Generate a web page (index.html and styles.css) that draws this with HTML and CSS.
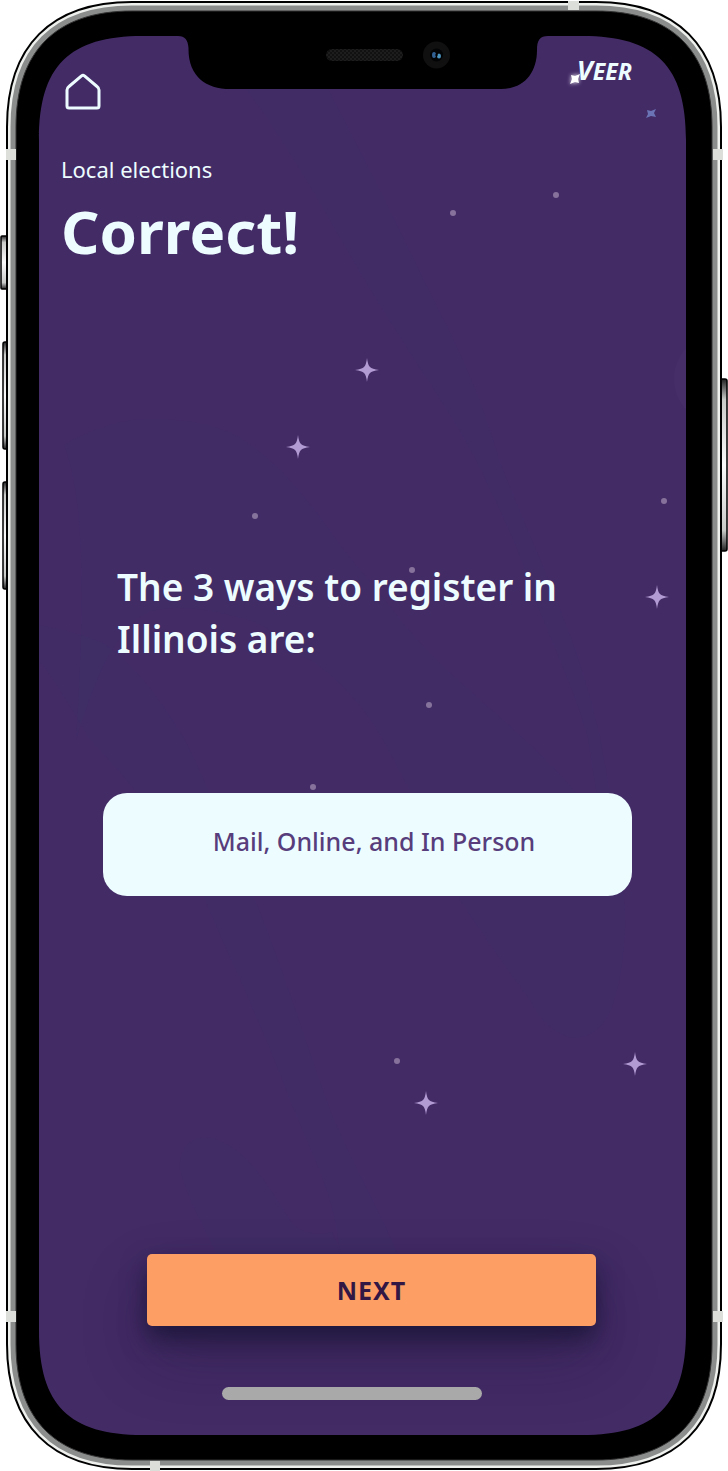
FILE: index.html
```html
<!DOCTYPE html>
<html lang="en">
<head>
<meta charset="utf-8">
<meta name="viewport" content="width=device-width, initial-scale=1">
<title>Local elections – Correct!</title>
<link rel="stylesheet" href="styles.css">
</head>
<body>
<div class="phone">
  <svg class="device" viewBox="0 0 728 1471" preserveAspectRatio="none" aria-hidden="true">
    <defs>
      <path id="body" d="M16 127C16 51 56 11 132 11H596C672 11 712 51 712 127V1344C712 1420 672 1460 596 1460H132C56 1460 16 1420 16 1344Z"/>
      <path id="glass" d="M39 140C39 66 69 36 143 36H178C185 36 188 40 188.500 48C188 76 206 89 230 89H501C523 89 537 74 537 50C537 40 540 36 548 36H582C656 36 686 66 686 140V1331C686 1405 656 1435 582 1435H143C69 1435 39 1405 39 1331Z"/>
      <clipPath id="screen-clip"><use href="#glass"/></clipPath>
      <linearGradient id="metal" x1="0" y1="0" x2="0" y2="1">
        <stop offset="0" stop-color="#222"/><stop offset=".12" stop-color="#c9cbc9"/><stop offset=".5" stop-color="#fafafa"/><stop offset=".88" stop-color="#c9cbc9"/><stop offset="1" stop-color="#222"/>
      </linearGradient>
      <pattern id="mesh" width="4" height="4" patternUnits="userSpaceOnUse">
        <rect width="4" height="4" fill="#111"/><circle cx="1" cy="1" r=".8" fill="#2c2c2c"/><circle cx="3" cy="3" r=".8" fill="#2c2c2c"/>
      </pattern>
      <path id="star" d="M0-12Q.8-5 3-3Q5-.8 12 0Q5 .8 3 3Q.8 5 0 12Q-.8 5-3 3Q-5 .8-12 0Q-5-.8-3-3Q-.8-5 0-12Z"/>
    </defs>

    <g fill="url(#metal)" stroke="#000" stroke-width="1.500">
      <rect x="1" y="236" width="7" height="53" rx="1"/>
      <rect x="3" y="342" width="6" height="107" rx="2"/>
      <rect x="3" y="482" width="6" height="107" rx="2"/>
      <rect x="720" y="379" width="7" height="172" rx="2"/>
    </g>

    <use href="#body" stroke="#000" stroke-width="20"/>
    <use href="#body" stroke="#edf0ed" stroke-width="16"/>
    <use href="#body" stroke="#8b8d8c" stroke-width="11"/>
    <use href="#body" stroke="#333" stroke-width="1"/>
    <g fill="#dcdfd9">
      <rect x="568" y="1" width="11" height="9"/><rect x="150" y="1461" width="10" height="10"/>
      <rect x="6" y="149" width="10" height="11"/><rect x="713" y="149" width="10" height="11"/>
      <rect x="6" y="1311" width="10" height="11"/><rect x="713" y="1311" width="10" height="11"/>
    </g>

    <use href="#glass" fill="#432b66"/>
    <g clip-path="url(#screen-clip)">
      <g fill="#2c4a78" fill-opacity=".05">
        <path d="M246 89H328C360 150 395 220 432 297C470 370 485 410 500 462C530 540 580 640 600 738L626 880H610L588 738C575 690 550 640 535 598C520 550 500 510 477 462C450 410 420 370 390 321C350 260 300 160 246 89Z"/>
        <path d="M64 445C90 430 120 419 150 419C190 419 220 425 245 441C280 465 300 490 328 528C350 560 370 580 390 606C450 690 560 750 600 830C620 860 626 890 625 930C620 1000 610 1035 575 1038C555 1036 540 1020 530 1000C500 960 480 930 460 900C430 830 410 790 382 738C360 700 330 670 303 656C280 635 260 622 245 619C200 605 160 605 142 615C110 640 95 680 76 740C85 600 85 500 64 445Z"/>
        <path d="M39 625C65 630 85 635 105 644C140 670 160 700 184 738C210 790 230 840 255 900C280 960 305 1040 330 1110C355 1170 385 1220 400 1260H340C338 1200 310 1150 290 1100C260 1020 230 960 205 900C170 830 130 780 90 740C75 715 55 680 39 660Z"/>
        <path d="M180 1170C178 1145 195 1134 213 1138C250 1150 270 1190 290 1220C300 1235 320 1235 332 1232L345 1260H220C205 1230 188 1200 180 1170Z"/>
      </g>
      <ellipse cx="704" cy="379" rx="30" ry="38" fill="#fff" fill-opacity=".018"/>
      <g fill="#9d8bad" fill-opacity=".75">
        <circle cx="453" cy="213" r="3"/><circle cx="556" cy="195" r="3"/><circle cx="255" cy="516" r="3"/><circle cx="664" cy="501" r="3"/><circle cx="412" cy="570" r="3"/><circle cx="429" cy="705" r="3"/><circle cx="313" cy="787" r="3"/><circle cx="397" cy="1061" r="3"/>
      </g>
      <g fill="#b29ad2">
        <use href="#star" x="367" y="370"/><use href="#star" x="298" y="447"/><use href="#star" x="657" y="597"/><use href="#star" x="635" y="1064"/><use href="#star" x="426" y="1103"/>
      </g>
      <path d="M647 110L651 111L656 109L654 113L656 117L651 116L646 118L648 114Z" fill="#6b75b5"/>
    </g>
    <rect x="326" y="49" width="77" height="12" rx="6" fill="url(#mesh)"/>
    <circle cx="436.500" cy="55" r="13.500" fill="#101010"/>
    <circle cx="436.500" cy="55" r="6.500" fill="#020305"/>
    <ellipse cx="434" cy="55" rx="2" ry="3" fill="#316093"/><ellipse cx="439" cy="56" rx="2" ry="2.500" fill="#4b92bd"/>
    <circle cx="436.500" cy="55" r="1.200" fill="#000"/>
  </svg>

  <main class="screen">
    <header class="topbar">
      <a class="home" href="#" aria-label="Home">
        <svg viewBox="0 0 36 38"><path d="M4 36Q2 36 2 34V18Q2 16 4 14.500L16.500 4Q18 2.500 19.500 4L32 14.500Q34 16 34 18V34Q34 36 32 36Z"/></svg>
      </a>
      <div class="brand">
        <svg class="spark" viewBox="0 0 14 14" aria-hidden="true"><path d="M3 3L7 4L12 2L10 7L11 11L7 10L2 12L4 7Z"/></svg>
        <span class="brand-initial">V</span><span class="brand-rest">EER</span>
      </div>
    </header>
    <p class="topic">Local elections</p>
    <h1 class="result">Correct!</h1>
    <h2 class="question">The 3 ways to register in Illinois are:</h2>
    <p class="answer">Mail, Online, and In Person</p>
    <button class="next" type="button">NEXT</button>
    <div class="home-bar"></div>
  </main>
</div>
</body>
</html>
```

FILE: styles.css
```css
* { box-sizing: border-box; }

body {
  margin: 0;
  background: #fff;
  color: #edfdff;
  font-family: "Noto Sans", sans-serif;
}

h1, h2, p { margin: 0; }

.phone { position: relative; }

.device {
  position: absolute;
  inset: 0;
  width: 100%;
  height: 100%;
  fill: #000;
}

.screen {
  position: relative;
  display: flex;
  flex-direction: column;
  padding: 56px 96px 71px 61px;
}

.topbar {
  display: flex;
  justify-content: space-between;
  height: 95px;
}

.home {
  width: 36px;
  height: 38px;
  margin: 16px 0 0 4px;
}

.home svg {
  display: block;
  fill: none;
  stroke: #edfdff;
  stroke-width: 3;
}

.brand {
  display: flex;
  align-items: baseline;
  height: 32px;
  font-style: italic;
  font-weight: 700;
  line-height: 28px;
}

.brand-initial { font-size: 27px; }
.brand-rest { font-size: 23px; }

.spark {
  align-self: flex-end;
  width: 14px;
  height: 14px;
  margin: 0 -5px 2px 0;
  fill: #fff;
  filter: drop-shadow(0 0 2px #fff);
}

.topic {
  font-size: 22px;
  line-height: 36px;
}

.result {
  font-size: 60px;
  font-weight: 700;
  line-height: 88px;
}

.question {
  margin: 286px 0 0 56px;
  font-size: 37px;
  font-weight: 600;
  line-height: 52px;
}

.answer {
  margin: 128px 0 0 42px;
  padding: 26px 0 33px 13px;
  border-radius: 24px;
  background: #edfdff;
  color: #583d7c;
  font-size: 25px;
  font-weight: 500;
  line-height: 44px;
  text-align: center;
}

.next {
  height: 72px;
  margin: 358px 36px 0 86px;
  padding: 0;
  border: 0;
  border-radius: 5px;
  background: #fd9e64;
  box-shadow: 0 12px 24px rgba(0, 10, 30, .5), 0 32px 64px rgba(20, 10, 40, .25);
  color: #321643;
  font: 700 25px/32px "Noto Sans", sans-serif;
  letter-spacing: 1px;
}

.home-bar {
  width: 260px;
  height: 13px;
  margin: 61px 0 0 161px;
  border-radius: 7px;
  background: #a9a9a9;
}
```
